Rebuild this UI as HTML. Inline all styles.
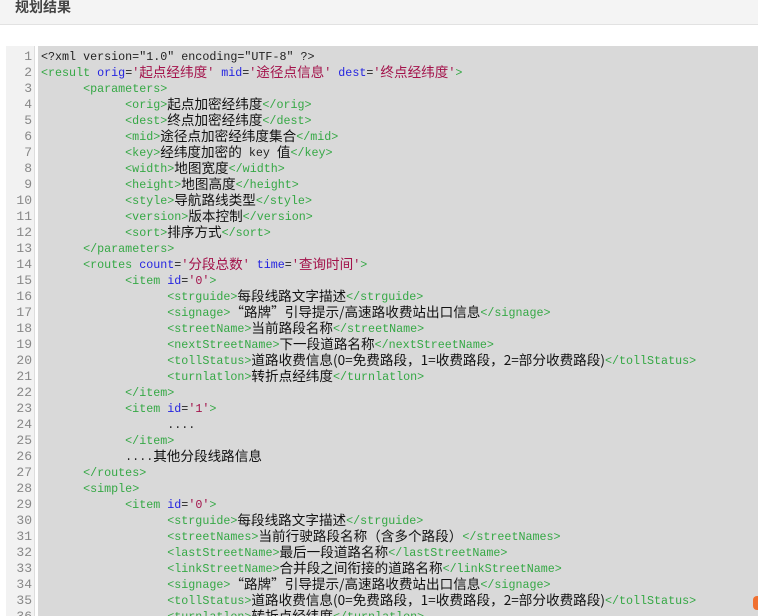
<!DOCTYPE html>
<html><head><meta charset="utf-8"><style>
*{margin:0;padding:0}
html,body{width:758px;height:616px;overflow:hidden}
body{background:#fff;position:relative;font-family:"Liberation Sans","Noto Sans CJK SC",sans-serif}
.hd{position:absolute;left:0;top:0;width:758px;height:24px;background:#f4f4f4;border-bottom:1px solid #e2e2e2}
.hd span{position:absolute;left:15px;top:-3px;font-size:14px;font-weight:bold;color:#444}
.gut{position:absolute;left:6px;top:46px;width:28px;height:580px;background:#f2f2f2;border-right:1px solid #ddd}
.code{position:absolute;left:38px;top:46px;width:720px;height:580px;background:#d9d9d9}
.ln{position:absolute;left:6px;top:49px;width:26px;text-align:right;font:13px "Liberation Mono",monospace;color:#888;line-height:16px}
pre{position:absolute;left:41px;top:49px;font:11.7px "Liberation Mono",monospace;line-height:16px;color:#222;white-space:pre}
.c{font-family:"Noto Sans CJK SC",sans-serif;font-size:13.6px;color:#111;line-height:0;position:relative;top:1px}
.t{color:#35a845}.a{color:#2424e0}.v{color:#a3124a}
.v .c{color:#a3124a}
.or{position:absolute;left:753px;top:596px;width:8px;height:14px;background:#f07030;border-radius:4px 0 0 4px}
</style></head><body>
<div class="hd"><span>规划结果</span></div>
<div class="gut"></div>
<div class="code"></div>
<div class="ln">1<br>2<br>3<br>4<br>5<br>6<br>7<br>8<br>9<br>10<br>11<br>12<br>13<br>14<br>15<br>16<br>17<br>18<br>19<br>20<br>21<br>22<br>23<br>24<br>25<br>26<br>27<br>28<br>29<br>30<br>31<br>32<br>33<br>34<br>35<br>36</div>
<pre>&lt;?xml version="1.0" encoding="UTF-8" ?&gt;
<span class="t">&lt;result</span> <span class="a">orig</span>=<span class="v">'<span class="c">起点经纬度</span>'</span> <span class="a">mid</span>=<span class="v">'<span class="c">途径点信息</span>'</span> <span class="a">dest</span>=<span class="v">'<span class="c">终点经纬度</span>'</span><span class="t">&gt;</span>
      <span class="t">&lt;parameters&gt;</span>
            <span class="t">&lt;orig&gt;</span><span class="c">起点加密经纬度</span><span class="t">&lt;/orig&gt;</span>
            <span class="t">&lt;dest&gt;</span><span class="c">终点加密经纬度</span><span class="t">&lt;/dest&gt;</span>
            <span class="t">&lt;mid&gt;</span><span class="c">途径点加密经纬度集合</span><span class="t">&lt;/mid&gt;</span>
            <span class="t">&lt;key&gt;</span><span class="c">经纬度加密的</span> key <span class="c">值</span><span class="t">&lt;/key&gt;</span>
            <span class="t">&lt;width&gt;</span><span class="c">地图宽度</span><span class="t">&lt;/width&gt;</span>
            <span class="t">&lt;height&gt;</span><span class="c">地图高度</span><span class="t">&lt;/height&gt;</span>
            <span class="t">&lt;style&gt;</span><span class="c">导航路线类型</span><span class="t">&lt;/style&gt;</span>
            <span class="t">&lt;version&gt;</span><span class="c">版本控制</span><span class="t">&lt;/version&gt;</span>
            <span class="t">&lt;sort&gt;</span><span class="c">排序方式</span><span class="t">&lt;/sort&gt;</span>
      <span class="t">&lt;/parameters&gt;</span>
      <span class="t">&lt;routes</span> <span class="a">count</span>=<span class="v">'<span class="c">分段总数</span>'</span> <span class="a">time</span>=<span class="v">'<span class="c">查询时间</span>'</span><span class="t">&gt;</span>
            <span class="t">&lt;item</span> <span class="a">id</span>=<span class="v">'0'</span><span class="t">&gt;</span>
                  <span class="t">&lt;strguide&gt;</span><span class="c">每段线路文字描述</span><span class="t">&lt;/strguide&gt;</span>
                  <span class="t">&lt;signage&gt;</span><span class="c">“路牌”引导提示/高速路收费站出口信息</span><span class="t">&lt;/signage&gt;</span>
                  <span class="t">&lt;streetName&gt;</span><span class="c">当前路段名称</span><span class="t">&lt;/streetName&gt;</span>
                  <span class="t">&lt;nextStreetName&gt;</span><span class="c">下一段道路名称</span><span class="t">&lt;/nextStreetName&gt;</span>
                  <span class="t">&lt;tollStatus&gt;</span><span class="c">道路收费信息(0=免费路段，1=收费路段，2=部分收费路段)</span><span class="t">&lt;/tollStatus&gt;</span>
                  <span class="t">&lt;turnlatlon&gt;</span><span class="c">转折点经纬度</span><span class="t">&lt;/turnlatlon&gt;</span>
            <span class="t">&lt;/item&gt;</span>
            <span class="t">&lt;item</span> <span class="a">id</span>=<span class="v">'1'</span><span class="t">&gt;</span>
                  ....
            <span class="t">&lt;/item&gt;</span>
            ....<span class="c">其他分段线路信息</span>
      <span class="t">&lt;/routes&gt;</span>
      <span class="t">&lt;simple&gt;</span>
            <span class="t">&lt;item</span> <span class="a">id</span>=<span class="v">'0'</span><span class="t">&gt;</span>
                  <span class="t">&lt;strguide&gt;</span><span class="c">每段线路文字描述</span><span class="t">&lt;/strguide&gt;</span>
                  <span class="t">&lt;streetNames&gt;</span><span class="c">当前行驶路段名称（含多个路段）</span><span class="t">&lt;/streetNames&gt;</span>
                  <span class="t">&lt;lastStreetName&gt;</span><span class="c">最后一段道路名称</span><span class="t">&lt;/lastStreetName&gt;</span>
                  <span class="t">&lt;linkStreetName&gt;</span><span class="c">合并段之间衔接的道路名称</span><span class="t">&lt;/linkStreetName&gt;</span>
                  <span class="t">&lt;signage&gt;</span><span class="c">“路牌”引导提示/高速路收费站出口信息</span><span class="t">&lt;/signage&gt;</span>
                  <span class="t">&lt;tollStatus&gt;</span><span class="c">道路收费信息(0=免费路段，1=收费路段，2=部分收费路段)</span><span class="t">&lt;/tollStatus&gt;</span>
                  <span class="t">&lt;turnlatlon&gt;</span><span class="c">转折点经纬度</span><span class="t">&lt;/turnlatlon&gt;</span>
</pre>
<div class="or"></div>
</body></html>
